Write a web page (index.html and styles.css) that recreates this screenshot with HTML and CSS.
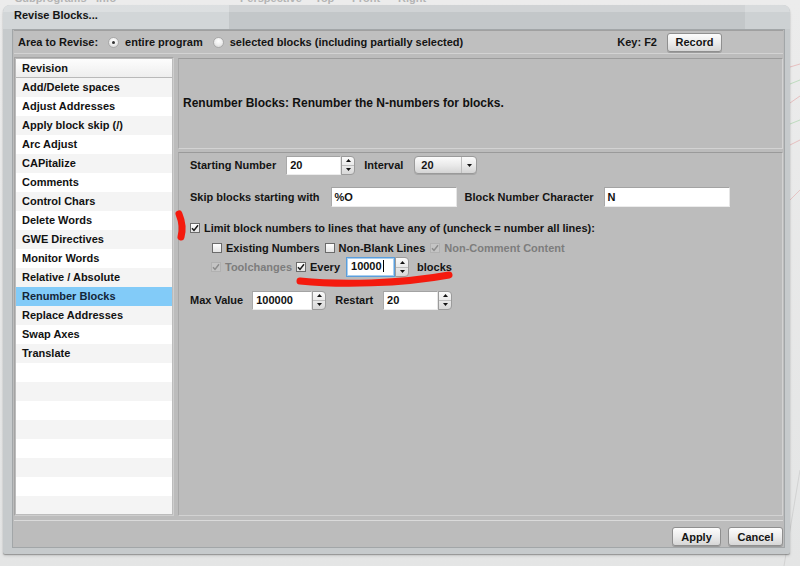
FILE: index.html
```html
<!DOCTYPE html>
<html lang="en">
<head>
<meta charset="utf-8">
<title>Revise Blocks</title>
<link rel="stylesheet" href="styles.css">
</head>
<body>
<div class="desktop">
  <div class="apptabs">
    <span class="tab tab-sub">Subprograms</span>
    <span class="tab tab-info">Info</span>
    <span class="tab tab-persp">Perspective</span>
    <span class="tab tab-top">Top</span>
    <span class="tab tab-front">Front</span>
    <span class="tab tab-right">Right</span>
  </div>
</div>
<svg class="viewport-lines" width="20" height="566" viewBox="0 0 20 566">
  <g stroke-width="1" opacity=".35">
    <path d="M0 70 L20 64" stroke="#e07070"/>
    <path d="M0 88 L20 80" stroke="#70c070"/>
    <path d="M0 110 L20 96" stroke="#e07070"/>
    <path d="M0 128 L20 120" stroke="#70c070"/>
    <path d="M0 150 L20 140" stroke="#e07070"/>
    <path d="M0 210 L20 190" stroke="#e08080"/>
    <path d="M4 566 L20 470" stroke="#b0b0b0"/>
  </g>
</svg>

<div class="dialog">
  <div class="titlebar">Revise Blocks...</div>
  <div class="dlg-body">
    <div class="toolbar">
      <span class="tb-label">Area to Revise:</span>
      <span class="radio checked"></span><span class="radio-text">entire program</span>
      <span class="radio second"></span><span class="radio-text">selected blocks (including partially selected)</span>
      <span class="key">Key: F2</span>
      <button class="btn btn-record">Record</button>
    </div>

    <div class="main">
      <div class="list-frame">
        <ul class="list">
          <li class="list-head">Revision</li>
          <li>Add/Delete spaces</li>
          <li>Adjust Addresses</li>
          <li>Apply block skip (/)</li>
          <li>Arc Adjust</li>
          <li>CAPitalize</li>
          <li>Comments</li>
          <li>Control Chars</li>
          <li>Delete Words</li>
          <li>GWE Directives</li>
          <li>Monitor Words</li>
          <li>Relative / Absolute</li>
          <li class="selected">Renumber Blocks</li>
          <li>Replace Addresses</li>
          <li>Swap Axes</li>
          <li>Translate</li>
          <li></li><li></li><li></li><li></li><li></li><li></li><li></li><li></li>
        </ul>
      </div>

      <div class="content">
        <div class="desc">Renumber Blocks: Renumber the N-numbers for blocks.</div>
        <div class="form">
          <div class="row r1">
            <span class="lab">Starting Number</span>
            <span class="field ml10">
              <span class="inp w55">20</span>
              <span class="spin">
                <span><svg width="5" height="3" viewBox="0 0 5 3"><path d="M0 3 L2.5 0 L5 3Z" fill="#111"/></svg></span>
                <span><svg width="5" height="3" viewBox="0 0 5 3"><path d="M0 0 L2.5 3 L5 0Z" fill="#111"/></svg></span>
              </span>
            </span>
            <span class="lab ml9">Interval</span>
            <span class="select">
              <span class="sel-val">20</span>
              <span class="sel-btn"><svg width="5" height="3" viewBox="0 0 5 3"><path d="M0 0 L2.5 3 L5 0Z" fill="#111"/></svg></span>
            </span>
          </div>

          <div class="row r2">
            <span class="lab">Skip blocks starting with</span>
            <span class="inp text w126 ml11">%O</span>
            <span class="lab ml8">Block Number Character</span>
            <span class="inp text w126 ml10">N</span>
          </div>

          <div class="row r3">
            <span class="cb"><svg width="8" height="8" viewBox="0 0 8 8"><path d="M1 4.2 L3 6.4 L7 1.2" fill="none" stroke="#1a1a1a" stroke-width="1.5"/></svg></span>
            <span class="cl">Limit block numbers to lines that have any of (uncheck = number all lines):</span>
          </div>

          <div class="row r4">
            <span class="cb"></span>
            <span class="cl">Existing Numbers</span>
            <span class="cb ml5"></span>
            <span class="cl">Non-Blank Lines</span>
            <span class="cb dis ml5"><svg width="8" height="8" viewBox="0 0 8 8"><path d="M1 4.2 L3 6.4 L7 1.2" fill="none" stroke="#8c8c8c" stroke-width="1.5"/></svg></span>
            <span class="cl dim">Non-Comment Content</span>
          </div>

          <div class="row r5">
            <span class="cb dis"><svg width="8" height="8" viewBox="0 0 8 8"><path d="M1 4.2 L3 6.4 L7 1.2" fill="none" stroke="#8c8c8c" stroke-width="1.5"/></svg></span>
            <span class="cl dim">Toolchanges</span>
            <span class="cb ml4"><svg width="8" height="8" viewBox="0 0 8 8"><path d="M1 4.2 L3 6.4 L7 1.2" fill="none" stroke="#1a1a1a" stroke-width="1.5"/></svg></span>
            <span class="cl">Every</span>
            <span class="field tall ml6">
              <span class="inp focus w49">10000<span class="caret"></span></span>
              <span class="spin">
                <span><svg width="5" height="3" viewBox="0 0 5 3"><path d="M0 3 L2.5 0 L5 3Z" fill="#111"/></svg></span>
                <span><svg width="5" height="3" viewBox="0 0 5 3"><path d="M0 0 L2.5 3 L5 0Z" fill="#111"/></svg></span>
              </span>
            </span>
            <span class="lab ml8">blocks</span>
          </div>

          <div class="row r6">
            <span class="lab">Max Value</span>
            <span class="field ml9">
              <span class="inp w60">100000</span>
              <span class="spin">
                <span><svg width="5" height="3" viewBox="0 0 5 3"><path d="M0 3 L2.5 0 L5 3Z" fill="#111"/></svg></span>
                <span><svg width="5" height="3" viewBox="0 0 5 3"><path d="M0 0 L2.5 3 L5 0Z" fill="#111"/></svg></span>
              </span>
            </span>
            <span class="lab ml9">Restart</span>
            <span class="field ml10">
              <span class="inp w55">20</span>
              <span class="spin">
                <span><svg width="5" height="3" viewBox="0 0 5 3"><path d="M0 3 L2.5 0 L5 3Z" fill="#111"/></svg></span>
                <span><svg width="5" height="3" viewBox="0 0 5 3"><path d="M0 0 L2.5 3 L5 0Z" fill="#111"/></svg></span>
              </span>
            </span>
          </div>
        </div>
      </div>
    </div>

    <div class="footer">
      <button class="btn btn-apply">Apply</button>
      <button class="btn btn-cancel">Cancel</button>
    </div>
  </div>
</div>

<svg class="annotations" width="800" height="566" viewBox="0 0 800 566">
  <path d="M179 214 Q184 226 181 237" fill="none" stroke="#f41a0e" stroke-width="7" stroke-linecap="round"/>
  <path d="M300 281 C 340 285, 400 284, 449 275" fill="none" stroke="#f41a0e" stroke-width="7" stroke-linecap="round"/>
</svg>
</body>
</html>
```

FILE: styles.css
```css
* { box-sizing: border-box; margin: 0; padding: 0; }

html, body { width: 800px; height: 566px; overflow: hidden; }

body {
  position: relative;
  background: #e5e6e6;
  font-family: "Liberation Sans", Arial, sans-serif;
  font-weight: bold;
  font-size: 11px;
  color: #141414;
}

/* background application */
.desktop {
  height: 566px;
  background: linear-gradient(to bottom, #ececec 0, #e4e5e5 100%);
}
.apptabs {
  display: flex;
  height: 5px;
  overflow: hidden;
  color: #b4b4b4;
  line-height: 11px;
}
.tab { margin-top: -7px; white-space: nowrap; }
.tab-sub { padding-left: 15px; width: 96px; }
.tab-info { width: 144px; }
.tab-persp { width: 75px; }
.tab-top { width: 37px; }
.tab-front { width: 46px; }

.viewport-lines { position: absolute; right: 0; top: 0; }

/* dialog window */
.dialog {
  position: absolute;
  left: 3px;
  top: 5px;
  width: 787px;
  height: 549px;
  display: flex;
  flex-direction: column;
  padding: 0 5px 6px 9px;
  border-radius: 7px 7px 2px 2px;
  background: #c6cacc;
  box-shadow: 0 1px 1px rgba(0,0,0,.28), 0 2px 3px rgba(0,0,0,.12);
}
.titlebar {
  flex: none;
  height: 24px;
  line-height: 20px;
  color: #151515;
  margin-left: -9px;
  padding-left: 11px;
  margin-right: -5px;
  border-radius: 7px 7px 0 0;
  background:
    linear-gradient(to bottom, rgba(255,255,255,.22) 0, rgba(255,255,255,.22) 7px, transparent 7px),
    linear-gradient(to right, #d2d6d8 0, #d2d6d8 226px, #c3c7c9 226px, #c3c7c9 742px, #cdd1d3 742px);
}

.dlg-body {
  flex: 1;
  display: flex;
  flex-direction: column;
  background: #bcbcbc;
  border: 1px solid #a2a6a8;
  padding: 0 1px;
}

/* toolbar */
.toolbar {
  flex: none;
  height: 24px;
  display: flex;
  align-items: center;
  padding: 0 61px 0 4px;
  background: #bfbfbf;
  border-top: 1px solid #a0a0a0;
  border-bottom: 1px solid #d3d3d3;
  white-space: nowrap;
}
.radio {
  width: 11px;
  height: 11px;
  margin-left: 10px;
  border-radius: 50%;
  border: 1px solid #a9a9a9;
  background: radial-gradient(circle at 50% 35%, #ffffff 0, #f0f0f0 45%, #d2d2d2 100%);
  display: inline-flex;
  align-items: center;
  justify-content: center;
  flex: none;
}
.radio.checked::after {
  content: "";
  width: 3px;
  height: 3px;
  border-radius: 50%;
  background: #333;
}
.radio-text { margin-left: 6px; }
.key { margin-left: auto; }

/* buttons */
.btn {
  height: 19px;
  font: inherit;
  color: #141414;
  border: 1px solid #8f8f8f;
  border-radius: 3px;
  background: linear-gradient(to bottom, #fcfcfc 0, #ececec 50%, #d6d6d6 100%);
  box-shadow: 0 1px 0 rgba(0,0,0,.18);
  text-align: center;
  padding: 0;
}
.btn-record { width: 55px; margin-left: 10px; }
.btn-apply { width: 49px; }
.btn-cancel { width: 55px; }

/* main area */
.main {
  flex: none;
  height: 459px;
  margin-top: 3px;
  display: flex;
  gap: 4px;
}
.list-frame {
  width: 160px;
  flex: none;
  padding: 1px;
  border: 1px solid;
  border-color: #a4a4a4 #cecece #cecece #a4a4a4;
  background: #bcbcbc;
}
.list {
  list-style: none;
  height: 100%;
  overflow: hidden;
  background: #fff;
}
.list li {
  height: 19px;
  line-height: 19px;
  padding-left: 6px;
  white-space: nowrap;
  color: #111;
}
.list li:nth-child(even) { background: #f4f4f4; }
.list li.list-head {
  background: linear-gradient(to bottom, #fdfdfd 0, #eeeeee 100%);
  border-bottom: 1px solid #b9b9b9;
  line-height: 18px;
}
.list li.selected { background: #82cbf8; color: #13263a; }

.content {
  flex: 1;
  display: flex;
  flex-direction: column;
  gap: 3px;
}
.desc {
  flex: none;
  height: 91px;
  margin-top: 1px;
  display: flex;
  align-items: center;
  padding: 0 0 2px 4px;
  font-size: 12px;
  color: #111;
  border: 1px solid;
  border-color: #9c9c9c #d3d3d3 #d3d3d3 #a8a8a8;
}
.form {
  flex: 1;
  padding: 2px 0 0 11px;
  border: 1px solid;
  border-color: #9a9a9a #d2d2d2 #d2d2d2 #a8a8a8;
}

/* form rows */
.row { display: flex; align-items: center; white-space: nowrap; }
.r1 { height: 20px; }
.r2 { height: 20px; margin-top: 12px; }
.r3 { height: 20px; margin-top: 11px; }
.r4 { height: 19px; padding-left: 22px; }
.r5 { height: 20px; padding-left: 21px; }
.r6 { height: 20px; margin-top: 13px; }

.ml4 { margin-left: 4px; }
.ml5 { margin-left: 5px; }
.ml6 { margin-left: 6px; }
.ml8 { margin-left: 8px; }
.ml9 { margin-left: 9px; }
.ml10 { margin-left: 10px; }
.ml11 { margin-left: 11px; }

.field { display: flex; height: 19px; }
.field.tall { height: 20px; }
.inp {
  display: block;
  height: 100%;
  background: #fff;
  border: 1px solid;
  border-color: #a3a3a3 #e6e6e6 #ececec #a9a9a9;
  padding-left: 3px;
  line-height: 17px;
  color: #111;
}
.inp.text { height: 20px; line-height: 18px; }
.inp.focus {
  border-color: #5a9edc;
  box-shadow: inset 0 0 0 1px #a9cff1;
  padding-left: 4px;
}
.caret {
  display: inline-block;
  width: 1px;
  height: 12px;
  margin-left: 1px;
  background: #000;
  vertical-align: -2px;
}
.w49 { width: 49px; }
.w55 { width: 55px; }
.w60 { width: 60px; }
.w126 { width: 126px; }

.spin {
  width: 14px;
  height: 100%;
  display: flex;
  flex-direction: column;
  border: 1px solid #9b9b9b;
  border-radius: 0 4px 4px 0;
  background: linear-gradient(to bottom, #fafafa 0, #e9e9e9 50%, #d8d8d8 100%);
}
.spin span {
  flex: 1;
  display: flex;
  align-items: center;
  justify-content: center;
}
.spin span + span { border-top: 1px solid #bdbdbd; }

.select {
  width: 63px;
  height: 18px;
  margin-left: 11px;
  display: flex;
  align-items: center;
  border: 1px solid #9a9a9a;
  border-radius: 4px;
  background: linear-gradient(to bottom, #fbfbfb 0, #e8e8e8 55%, #d4d4d4 100%);
  box-shadow: 0 1px 0 rgba(0,0,0,.12);
}
.sel-val { flex: 1; padding-left: 6px; }
.sel-btn {
  width: 15px;
  height: 100%;
  display: flex;
  align-items: center;
  justify-content: center;
  border-left: 1px solid #bdbdbd;
}

.cb {
  width: 10px;
  height: 10px;
  flex: none;
  display: inline-flex;
  align-items: center;
  justify-content: center;
  border: 1px solid #6b6b6b;
  background: linear-gradient(to bottom, #ffffff 0, #e4e4e4 100%);
}
.cb.dis { border-color: #b1b1b1; background: #c4c4c4; }
.cl { margin-left: 4px; }
.dim { color: #7d7d7d; }

/* footer */
.footer {
  flex: none;
  height: 27px;
  margin-top: 4px;
  padding-top: 6px;
  border-top: 1px solid #dadada;
  display: flex;
  justify-content: flex-end;
  align-items: flex-start;
  gap: 7px;
}

.annotations { position: absolute; left: 0; top: 0; pointer-events: none; }
```
